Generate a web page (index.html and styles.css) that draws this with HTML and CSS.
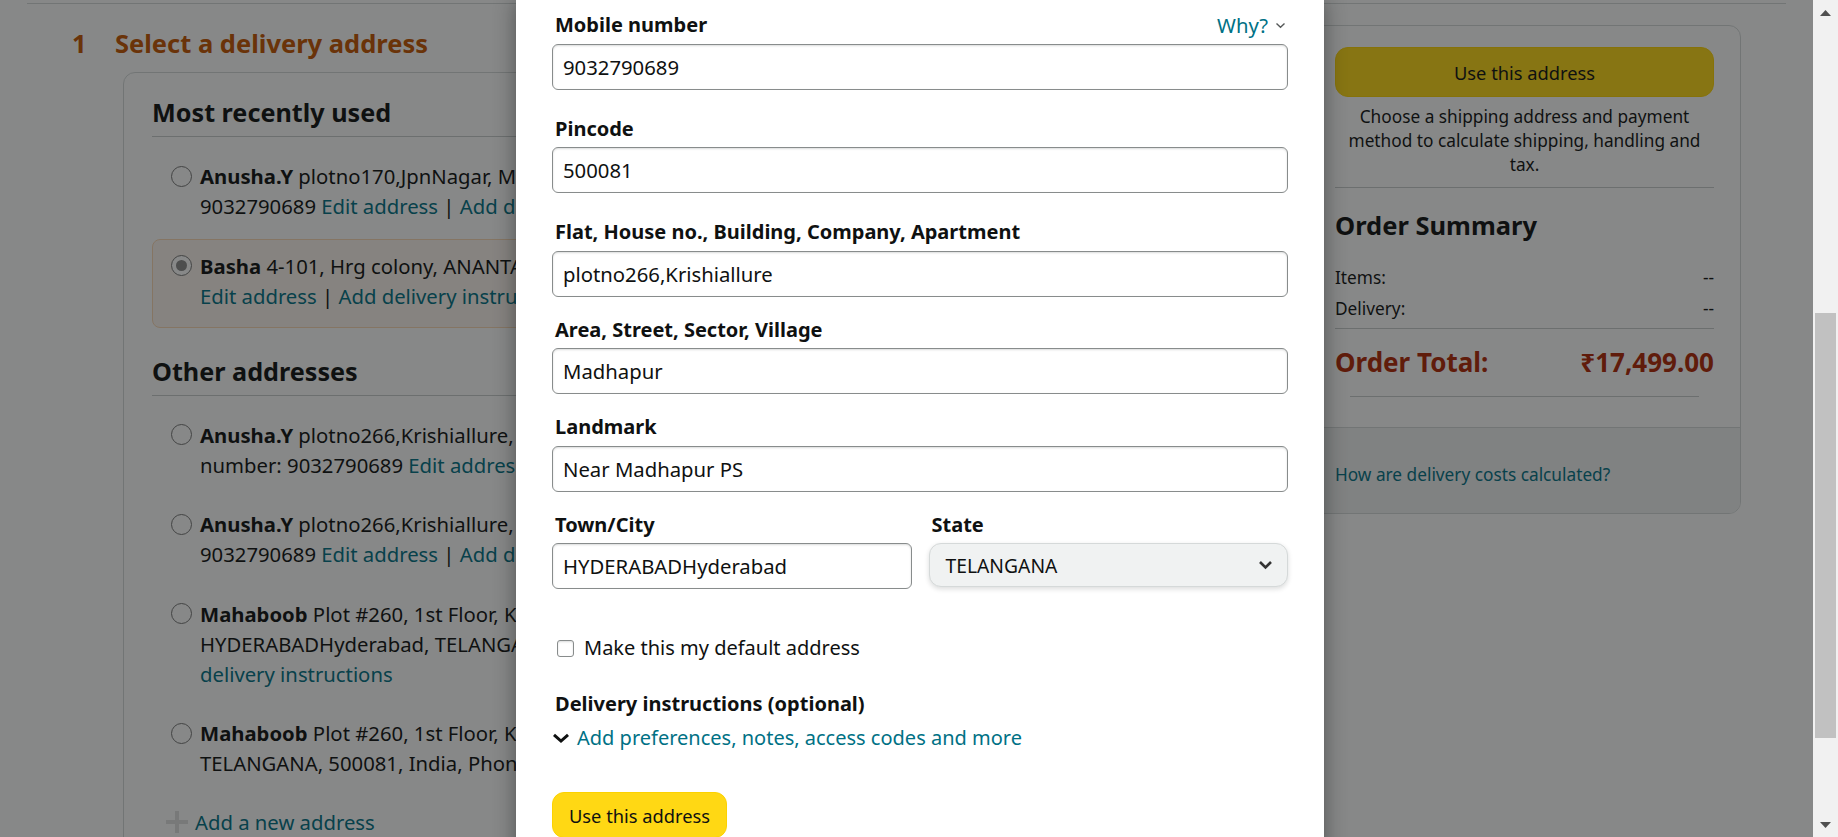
FILE: index.html
```html
<!DOCTYPE html>
<html lang="en">
<head>
<meta charset="utf-8">
<title>Select a delivery address</title>
<link rel="stylesheet" href="styles.css">
</head>
<body>
<div class="window">
  <div class="viewport">
    <div class="page">
      <div class="topline"></div>
      <div class="checkout">
        <div class="main-col">
          <div class="step-head">
            <span class="step-num">1</span>
            <h2 class="step-title">Select a delivery address</h2>
          </div>
          <div class="addr-box">
            <h3 class="addr-heading">Most recently used</h3>
            <div class="addr-list">
              <div class="addr-row">
                <span class="radio"></span>
                <div class="addr-text"><b>Anusha.Y</b> plotno170,JpnNagar, Madhapur, HYDERABAD, TELANGANA, 500081, India, Phone number:<br>9032790689 <a class="link">Edit address</a> | <a class="link">Add delivery instructions</a></div>
              </div>
              <div class="addr-row selected">
                <span class="radio checked"></span>
                <div class="addr-text"><b>Basha</b> 4-101, Hrg colony, ANANTAPUR, ANDHRA PRADESH, 515001, India, Phone number: 9032790689<br><a class="link">Edit address</a> | <a class="link">Add delivery instructions</a></div>
              </div>
            </div>
            <h3 class="addr-heading other">Other addresses</h3>
            <div class="addr-list">
              <div class="addr-row">
                <span class="radio"></span>
                <div class="addr-text"><b>Anusha.Y</b> plotno266,Krishiallure, Madhapur, HYDERABADHyderabad, TELANGANA, 500081, India, Phone<br>number: 9032790689 <a class="link">Edit address</a> | <a class="link">Add delivery instructions</a></div>
              </div>
              <div class="addr-row">
                <span class="radio"></span>
                <div class="addr-text"><b>Anusha.Y</b> plotno266,Krishiallure, Near Madhapur PS, Madhapur, HYDERABAD, TELANGANA, 500081, India, Phone number:<br>9032790689 <a class="link">Edit address</a> | <a class="link">Add delivery instructions</a></div>
              </div>
              <div class="addr-row">
                <span class="radio"></span>
                <div class="addr-text"><b>Mahaboob</b> Plot #260, 1st Floor, Kavuri Hills, Near Madhapur PS, Madhapur,<br>HYDERABADHyderabad, TELANGANA, 500081, India, Phone number: 9032790689 <a class="link">Edit address</a> | <a class="link">Add</a><br><a class="link">delivery instructions</a></div>
              </div>
              <div class="addr-row">
                <span class="radio"></span>
                <div class="addr-text"><b>Mahaboob</b> Plot #260, 1st Floor, Kavuri Hills, Madhapur, HYDERABADHyderabad,<br>TELANGANA, 500081, India, Phone number: 9032790689 <a class="link">Edit address</a> | <a class="link">Add delivery instructions</a></div>
              </div>
            </div>
            <div class="add-new">
              <svg class="plus" width="22" height="22" viewBox="0 0 22 22"><rect x="9" y="0" width="4" height="22"/><rect x="0" y="9" width="22" height="4"/></svg>
              <a class="link">Add a new address</a>
            </div>
          </div>
        </div>
        <aside class="summary">
          <div class="summary-inner">
            <div class="btn-yellow wide">Use this address</div>
            <p class="summary-note">Choose a shipping address and payment method to calculate shipping, handling and tax.</p>
            <div class="divider"></div>
            <h3 class="summary-title">Order Summary</h3>
            <div class="sum-row first"><span>Items:</span><span>--</span></div>
            <div class="sum-row"><span>Delivery:</span><span>--</span></div>
            <div class="divider tight"></div>
            <div class="total-row"><span>Order Total:</span><span>₹17,499.00</span></div>
            <div class="divider inset"></div>
          </div>
          <div class="summary-foot"><a class="link">How are delivery costs calculated?</a></div>
        </aside>
      </div>
    </div>

    <div class="backdrop"></div>

    <div class="modal">
      <div class="field first">
        <div class="label-row">
          <label class="label">Mobile number</label>
          <a class="why">Why?<svg width="11" height="7" viewBox="0 0 11 7"><polyline points="1.5,1.5 5.5,5.2 9.5,1.5" fill="none" stroke="#565959" stroke-width="1.4"/></svg></a>
        </div>
        <input class="text-input" type="text" value="9032790689">
      </div>
      <div class="field second">
        <div class="label-row"><label class="label">Pincode</label></div>
        <input class="text-input" type="text" value="500081">
      </div>
      <div class="field">
        <div class="label-row"><label class="label">Flat, House no., Building, Company, Apartment</label></div>
        <input class="text-input" type="text" value="plotno266,Krishiallure">
      </div>
      <div class="field">
        <div class="label-row"><label class="label">Area, Street, Sector, Village</label></div>
        <input class="text-input" type="text" value="Madhapur">
      </div>
      <div class="field">
        <div class="label-row"><label class="label">Landmark</label></div>
        <input class="text-input" type="text" value="Near Madhapur PS">
      </div>
      <div class="field-pair">
        <div class="field-col">
          <div class="label-row"><label class="label">Town/City</label></div>
          <input class="text-input" type="text" value="HYDERABADHyderabad">
        </div>
        <div class="field-col">
          <div class="label-row"><label class="label">State</label></div>
          <div class="dropdown">
            <span>TELANGANA</span>
            <svg width="15" height="10" viewBox="0 0 15 10"><polyline points="2,2 7.5,7.5 13,2" fill="none" stroke="#333" stroke-width="2.6"/></svg>
          </div>
        </div>
      </div>
      <div class="check-row">
        <span class="checkbox"></span>
        <span class="check-label">Make this my default address</span>
      </div>
      <div class="label delivery-label">Delivery instructions (optional)</div>
      <div class="expander">
        <svg width="18" height="10" viewBox="0 0 18 10"><polyline points="2,1.8 9,8 16,1.8" fill="none" stroke="#0f1111" stroke-width="3"/></svg>
        <a class="link">Add preferences, notes, access codes and more</a>
      </div>
      <div class="btn-yellow modal-btn">Use this address</div>
    </div>
  </div>

  <div class="scrollbar">
    <div class="sb-arrow"><svg width="11" height="6" viewBox="0 0 11 6"><polygon points="0,6 5.5,0 11,6" fill="#505050"/></svg></div>
    <div class="sb-track"><div class="sb-thumb"></div></div>
    <div class="sb-arrow"><svg width="11" height="6" viewBox="0 0 11 6"><polygon points="0,0 11,0 5.5,6" fill="#505050"/></svg></div>
  </div>
</div>
</body>
</html>
```

FILE: styles.css
```css
html, body {
  margin: 0;
  padding: 0;
}

body {
  font-family: "Noto Sans", "DejaVu Sans", sans-serif;
  color: #0f1111;
  background: #ffffff;
  overflow: hidden;
}

.window {
  display: flex;
  width: 1838px;
  height: 837px;
}

.viewport {
  position: relative;
  flex: 1;
  height: 837px;
  overflow: hidden;
}

.page {
  height: 100%;
}

.topline {
  height: 3px;
  margin: 0 27px;
  border-bottom: 1px solid #d5d9d9;
}

.checkout {
  display: flex;
  gap: 28px;
  padding: 21px 72px 0;
}

.main-col {
  flex: 1;
  min-width: 0;
}

.step-head {
  display: flex;
  align-items: center;
  height: 36px;
}

.step-num,
.step-title {
  font-size: 25.5px;
  font-weight: 700;
  line-height: 36px;
  color: #c45500;
  margin: 0;
}

.step-num {
  width: 43px;
}

.addr-box {
  margin: 11px 0 0 51px;
  border: 1px solid #d5d9d9;
  border-radius: 12px;
  padding: 21px 28px 40px;
  overflow: hidden;
}

.addr-heading {
  margin: 0;
  font-size: 25.2px;
  font-weight: 700;
  line-height: 36px;
  padding-bottom: 6px;
  border-bottom: 1px solid #c9cccc;
}

.addr-heading.other {
  margin-top: 24.5px;
}

.addr-list {
  margin-top: 12px;
}

.addr-row {
  display: flex;
  gap: 8px;
  border: 1px solid transparent;
  border-radius: 8px;
  padding: 11px 17px 16.5px 18px;
}

.addr-row.selected {
  background: #fcf5ee;
  border-color: #fbd8b4;
}

.radio {
  flex: none;
  box-sizing: border-box;
  width: 21px;
  height: 21px;
  margin-top: 4.5px;
  border: 1.5px solid #767676;
  border-radius: 50%;
  background: #ffffff;
  display: flex;
  align-items: center;
  justify-content: center;
}

.radio.checked::after {
  content: "";
  width: 11px;
  height: 11px;
  border-radius: 50%;
  background: #8a8a8a;
}

.addr-text {
  font-size: 20.3px;
  line-height: 30px;
  white-space: nowrap;
}

.link {
  color: #007185;
  text-decoration: none;
}

.add-new {
  display: flex;
  align-items: center;
  gap: 7px;
  margin: 11px 0 0 14px;
  font-size: 20.3px;
  line-height: 30px;
}

.plus {
  fill: #e0e0e0;
  flex: none;
}

/* Order summary */
.summary {
  flex: none;
  width: 433px;
  box-sizing: border-box;
  align-self: flex-start;
  border: 1px solid #d5d9d9;
  border-radius: 12px;
  overflow: hidden;
}

.summary-inner {
  padding: 21px 26px 30px;
}

.btn-yellow {
  display: flex;
  align-items: center;
  justify-content: center;
  box-sizing: border-box;
  background: #ffd814;
  border: 1px solid #fcd200;
  color: #0f1111;
  font-size: 18.3px;
}

.btn-yellow.wide {
  height: 50px;
  border-radius: 13px;
}

.summary-note {
  margin: 8px 0 0;
  text-align: center;
  font-size: 17.25px;
  line-height: 24px;
}

.divider {
  height: 1px;
  background: #c9cccc;
  margin-top: 10px;
}

.divider.tight {
  margin-top: 4px;
}

.divider.inset {
  margin: 16px 15px 0;
}

.summary-title {
  margin: 19px 0 0;
  font-size: 25.5px;
  font-weight: 700;
  line-height: 36px;
}

.sum-row {
  display: flex;
  justify-content: space-between;
  font-size: 17.25px;
  line-height: 30px;
}

.sum-row.first {
  margin-top: 19.5px;
}

.sum-row.first + .sum-row {
  margin-top: 1px;
}

.total-row {
  display: flex;
  justify-content: space-between;
  margin-top: 15px;
  font-size: 26px;
  font-weight: 700;
  line-height: 36px;
  color: #b12704;
}

.summary-foot {
  background: #f0f2f2;
  border-top: 1px solid #d5d9d9;
  padding: 35px 26px 26px;
  font-size: 17.25px;
  line-height: 24px;
}

/* Overlay */
.backdrop {
  position: absolute;
  inset: 0;
  background: rgba(15, 17, 17, 0.5);
}

.modal {
  position: absolute;
  left: 516px;
  top: 0;
  width: 808px;
  height: 900px;
  box-sizing: border-box;
  padding: 10px 36px 0;
  background: #ffffff;
  box-shadow: 0 0 20px rgba(15, 17, 17, 0.45);
}

.field {
  margin-bottom: 18px;
}

.field.first,
.field.second {
  margin-bottom: 24px;
}

.label-row {
  display: flex;
  justify-content: space-between;
  align-items: center;
  height: 30px;
  padding-bottom: 3.5px;
}

.label {
  padding-left: 3px;
  font-size: 20px;
  font-weight: 700;
  line-height: 30px;
}

.why {
  display: flex;
  align-items: center;
  gap: 7px;
  margin-right: 2px;
  color: #007185;
  font-size: 20.3px;
  line-height: 30px;
}

.text-input {
  display: block;
  width: 100%;
  height: 46px;
  box-sizing: border-box;
  margin: 0;
  padding: 0 10px;
  border: 1px solid #888c8c;
  border-radius: 6px;
  box-shadow: inset 0 1px 2px rgba(15, 17, 17, 0.15);
  font-family: inherit;
  font-size: 20.3px;
  color: #0f1111;
  background: #ffffff;
  outline: none;
}

.field-pair {
  display: grid;
  grid-template-columns: 1fr 1fr;
  gap: 17px;
}

.dropdown {
  display: flex;
  align-items: center;
  justify-content: space-between;
  height: 44px;
  box-sizing: border-box;
  padding: 0 14px 0 16px;
  background: #f0f2f2;
  border: 1px solid #d5d9d9;
  border-radius: 12px;
  box-shadow: 0 2px 5px rgba(15, 17, 17, 0.15);
  font-size: 19.3px;
  color: #0f1111;
}

.check-row {
  display: flex;
  align-items: center;
  height: 30px;
  margin-top: 44px;
}

.checkbox {
  width: 17px;
  height: 17px;
  box-sizing: border-box;
  margin-left: 5px;
  border: 1px solid #888c8c;
  border-radius: 3px;
  box-shadow: inset 0 1px 2px rgba(15, 17, 17, 0.15);
}

.check-label {
  margin-left: 10px;
  font-size: 20px;
  line-height: 30px;
}

.delivery-label {
  display: block;
  margin-top: 25.5px;
}

.expander {
  display: flex;
  align-items: center;
  gap: 7px;
  margin-top: 4.5px;
  font-size: 20px;
  line-height: 30px;
}

.expander svg {
  flex: none;
}

.modal-btn {
  width: 175px;
  height: 46px;
  margin-top: 39px;
  border-radius: 12px;
}

/* Scrollbar */
.scrollbar {
  width: 25px;
  flex: none;
  display: flex;
  flex-direction: column;
  background: #f1f1f1;
}

.sb-arrow {
  height: 25px;
  display: flex;
  align-items: center;
  justify-content: center;
}

.sb-track {
  flex: 1;
  padding: 0 2px;
}

.sb-thumb {
  margin-top: 288px;
  height: 425px;
  background: #c1c1c1;
}
```
